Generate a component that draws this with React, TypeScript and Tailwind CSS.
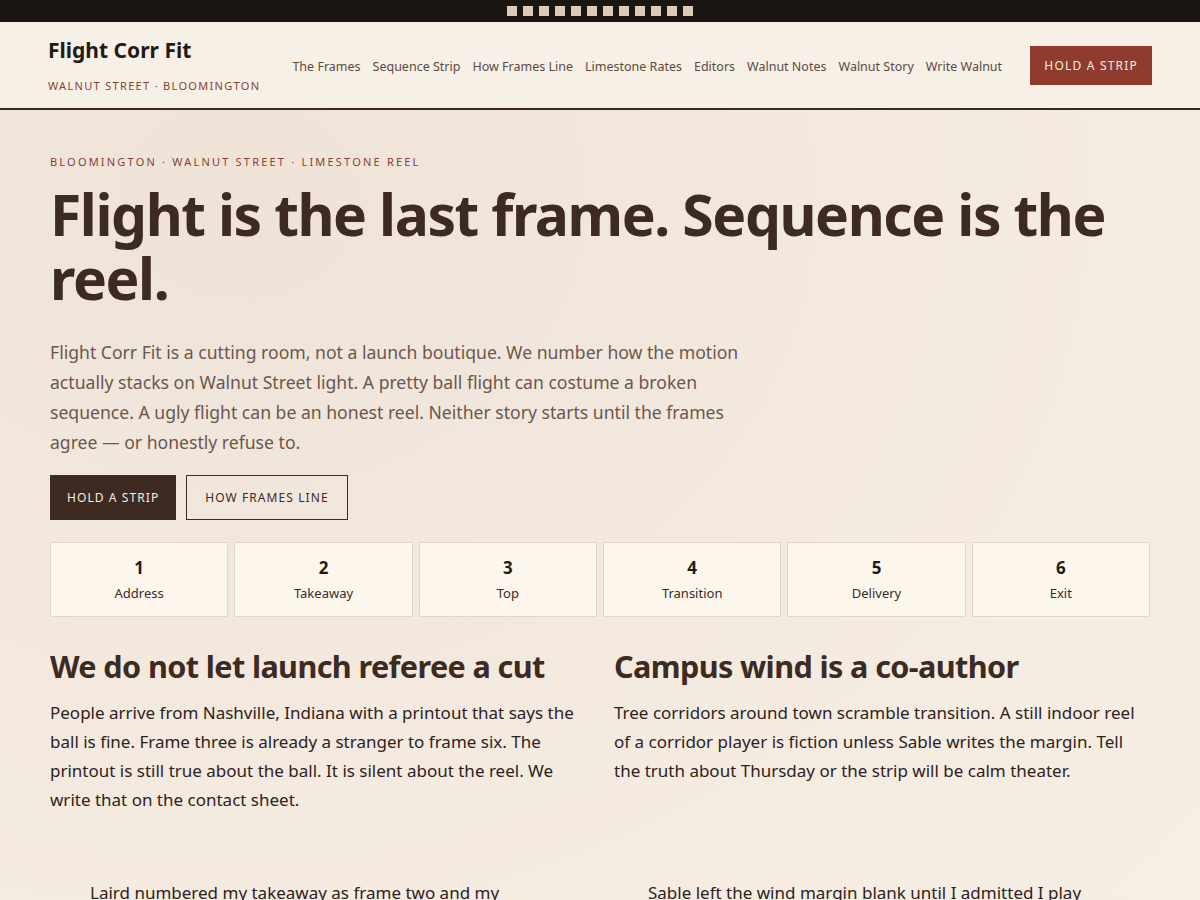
const navLinks = [
  "The Frames",
  "Sequence Strip",
  "How Frames Line",
  "Limestone Rates",
  "Editors",
  "Walnut Notes",
  "Walnut Story",
  "Write Walnut",
];

const frames = [
  { n: 1, label: "Address" },
  { n: 2, label: "Takeaway" },
  { n: 3, label: "Top" },
  { n: 4, label: "Transition" },
  { n: 5, label: "Delivery" },
  { n: 6, label: "Exit" },
];

function FilmStrip() {
  return (
    <div className="flex h-[22px] items-center justify-center gap-[6px] bg-[#1b1511]">
      {Array.from({ length: 12 }).map((_, i) => (
        <span key={i} className="size-[10px] bg-[#dccbb7]" />
      ))}
    </div>
  );
}

function Header() {
  return (
    <header className="flex items-center border-b-2 border-[#3a2820] bg-[#f7f0e6] px-12 pt-[13px] pb-[15px]">
      <div className="shrink-0">
        <div className="text-[21px] font-bold leading-[30px] text-[#241a15]">
          Flight Corr Fit
        </div>
        <div className="mt-[14px] text-[11px] leading-[14px] tracking-[0.12em] text-[#8a3f31]">
          WALNUT STREET · BLOOMINGTON
        </div>
      </div>
      <nav className="ml-8 mt-[7px] flex gap-3 whitespace-nowrap text-[12.5px] text-[#5c4a40]">
        {navLinks.map((l) => (
          <a key={l} href="#" className="hover:text-[#241a15]">
            {l}
          </a>
        ))}
      </nav>
      <a
        href="#"
        className="ml-auto mt-[3px] flex h-[39px] items-center bg-[#8f3c2e] px-[14px] text-[12px] tracking-[0.1em] text-[#f7ebe0]"
      >
        HOLD A STRIP
      </a>
    </header>
  );
}

export default function App() {
  return (
    <div className="h-[900px] overflow-hidden bg-[#f5ece2] font-['Noto_Sans',sans-serif] text-[#3d2b22]">
      <FilmStrip />
      <Header />
      <main className="bg-[radial-gradient(ellipse_at_20%_10%,#efe3d8_0%,#f3e9df_45%,#f7efe5_100%)] px-[50px] pt-[45px] pb-10">
        <p className="text-[11px] leading-[14px] tracking-[0.2em] text-[#8a3f31]">
          BLOOMINGTON · WALNUT STREET · LIMESTONE REEL
        </p>
        <h1 className="mt-[13px] text-[57px] font-bold leading-[64px] tracking-[-0.025em] text-[#3d2b22]">
          Flight is the last frame. Sequence is the reel.
        </h1>
        <p className="mt-[27px] max-w-[720px] text-[17.6px] leading-[30px] text-[#6b574c]">
          Flight Corr Fit is a cutting room, not a launch boutique. We number how the
          motion actually stacks on Walnut Street light. A pretty ball flight can
          costume a broken sequence. A ugly flight can be an honest reel. Neither story
          starts until the frames agree — or honestly refuse to.
        </p>
        <div className="mt-[18px] flex gap-[10px]">
          <a
            href="#"
            className="flex h-[45px] items-center bg-[#3d2b22] px-[17px] text-[12px] tracking-[0.09em] text-[#f5ebe0]"
          >
            HOLD A STRIP
          </a>
          <a
            href="#"
            className="flex h-[45px] items-center border border-[#3d2b22] px-[18px] text-[12px] tracking-[0.09em] text-[#3d2b22]"
          >
            HOW FRAMES LINE
          </a>
        </div>

        <div className="mt-[22px] grid grid-cols-6 gap-[6px]">
          {frames.map((f) => (
            <div
              key={f.n}
              className="flex h-[75px] flex-col items-center justify-center border border-[#e4d6c6] bg-[#fdf6ec]"
            >
              <span className="text-[17px] font-bold leading-[22px] text-[#241a15]">
                {f.n}
              </span>
              <span className="mt-[5px] text-[13px] leading-[18px] text-[#3a2b23]">
                {f.label}
              </span>
            </div>
          ))}
        </div>

        <div className="mt-[29px] grid grid-cols-2 gap-7">
          <section>
            <h2 className="text-[30.6px] font-bold leading-[40px] tracking-[-0.02em] text-[#3d2b22]">
              We do not let launch referee a cut
            </h2>
            <p className="mt-[12px] text-[17px] leading-[29px] text-[#2e221c]">
              People arrive from Nashville, Indiana with a printout that says the ball is
              fine. Frame three is already a stranger to frame six. The printout is still
              true about the ball. It is silent about the reel. We write that on the
              contact sheet.
            </p>
          </section>
          <section>
            <h2 className="text-[30.6px] font-bold leading-[40px] tracking-[-0.02em] text-[#3d2b22]">
              Campus wind is a co-author
            </h2>
            <p className="mt-[12px] text-[17px] leading-[29px] text-[#2e221c]">
              Tree corridors around town scramble transition. A still indoor reel of a
              corridor player is fiction unless Sable writes the margin. Tell the truth
              about Thursday or the strip will be calm theater.
            </p>
          </section>
        </div>

        <div className="mt-[64px] grid grid-cols-2 gap-7">
          <blockquote className="pl-10 pr-16 text-[17px] leading-[29px] text-[#2e221c]">
            Laird numbered my takeaway as frame two and my transition as frame four. Then
            he showed me they were the same mistake.
          </blockquote>
          <blockquote className="pl-[34px] pr-16 text-[17px] leading-[29px] text-[#2e221c]">
            Sable left the wind margin blank until I admitted I play most of my rounds
            under the corridor trees.
          </blockquote>
        </div>
      </main>
    </div>
  );
}
